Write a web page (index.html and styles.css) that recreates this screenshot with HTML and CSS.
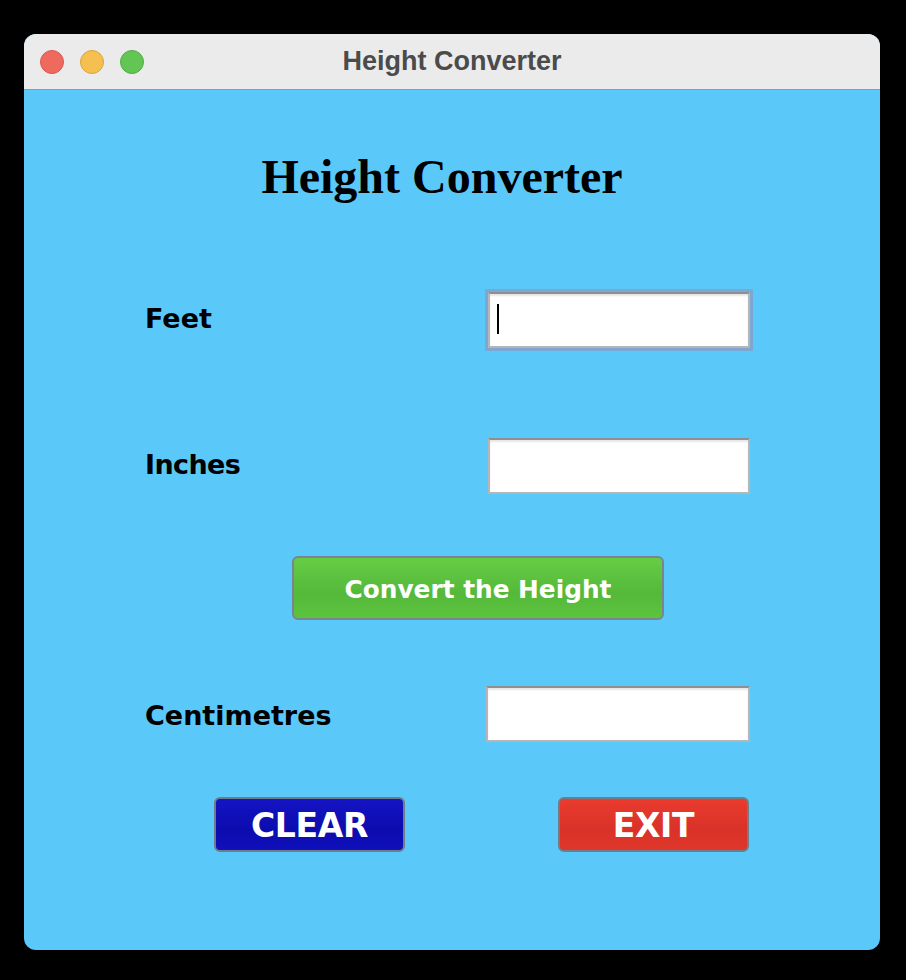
FILE: index.html
```html
<!DOCTYPE html>
<html>
<head>
<meta charset="utf-8">
<title>Height Converter</title>
<link rel="stylesheet" href="styles.css">
</head>
<body>
<div class="window">
  <div class="titlebar">
    <div class="lights">
      <span class="light red"></span>
      <span class="light yellow"></span>
      <span class="light green"></span>
    </div>
    <div class="title">Height Converter</div>
  </div>
  <div class="content">
    <h1 class="heading">Height Converter</h1>
    <div class="row row-feet">
      <span class="label">Feet</span>
      <div class="field focused"><span class="caret"></span></div>
    </div>
    <div class="row row-inches">
      <span class="label">Inches</span>
      <div class="field"></div>
    </div>
    <div class="convert-wrap">
      <button class="btn convert">Convert the Height</button>
    </div>
    <div class="row row-cm">
      <span class="label">Centimetres</span>
      <div class="field wide"></div>
    </div>
    <div class="actions">
      <button class="btn big clear">CLEAR</button>
      <button class="btn big exit">EXIT</button>
    </div>
  </div>
</div>
</body>
</html>
```

FILE: styles.css
```css
html, body {
  margin: 0;
  padding: 0;
  background: #000;
}
body {
  width: 906px;
  height: 980px;
  overflow: hidden;
}
.window {
  width: 856px;
  height: 916px;
  margin: 34px 0 0 24px;
  border-radius: 12px;
  overflow: hidden;
  background: #5bc8fa;
  display: flex;
  flex-direction: column;
}
.titlebar {
  height: 55px;
  flex: none;
  background: #ebebeb;
  border-bottom: 1px solid #4cb2e4;
  display: flex;
  align-items: center;
  position: relative;
}
.lights {
  display: flex;
  gap: 16px;
  padding-left: 16px;
}
.light {
  width: 24px;
  height: 24px;
  border-radius: 50%;
  box-sizing: border-box;
}
.red { background: #ee6a5f; border: 1px solid #d9584f; }
.yellow { background: #f5c04f; border: 1px solid #dba53c; }
.green { background: #62c554; border: 1px solid #4fae44; }
.title {
  position: absolute;
  left: 0;
  right: 0;
  top: 0;
  bottom: 0;
  display: flex;
  align-items: center;
  justify-content: center;
  font-family: "Liberation Sans", Arial, sans-serif;
  font-weight: bold;
  font-size: 27px;
  color: #4b4b4b;
  pointer-events: none;
}
.content {
  display: flex;
  flex-direction: column;
  flex: 1;
}
.heading {
  margin: 59px 0 0 0;
  height: 56px;
  line-height: 56px;
  text-align: center;
  padding-right: 20px;
  font-family: "Liberation Serif", "Times New Roman", serif;
  font-weight: bold;
  font-size: 48px;
  color: #000;
}
.row {
  display: flex;
  align-items: center;
  height: 56px;
  padding-left: 121px;
}
.row-feet { margin-top: 87px; }
.row-inches { margin-top: 90px; }
.row-cm { margin-top: 66px; }
.label {
  width: 343px;
  font-family: "DejaVu Sans", Verdana, sans-serif;
  font-weight: bold;
  font-size: 27px;
  color: #000;
  padding-bottom: 3px;
}
.row-inches .label {
  letter-spacing: -0.6px;
}
.row-cm .label {
  padding-bottom: 0;
  padding-top: 3px;
}
.field {
  width: 262px;
  height: 56px;
  box-sizing: border-box;
  background: #fff;
  border: 2px solid #b6b6b6;
  border-top-color: #8f8f8f;
  box-shadow: inset 0 2px 2px rgba(0, 0, 0, 0.10);
  position: relative;
}
.field.wide {
  width: 264px;
  margin-left: -2px;
}
.field.focused {
  box-shadow: inset 0 2px 2px rgba(0, 0, 0, 0.10), 0 0 0 3px #7ea6d3;
}
.caret {
  position: absolute;
  left: 7px;
  top: 10px;
  width: 2px;
  height: 30px;
  background: #000;
}
.convert-wrap {
  margin-top: 62px;
  padding-left: 268px;
  display: flex;
}
.btn {
  box-sizing: border-box;
  border: 2px solid #6f7d88;
  border-radius: 6px;
  color: #fff;
  font-family: "DejaVu Sans", Verdana, sans-serif;
  font-weight: bold;
  padding: 0;
  margin: 0;
  cursor: pointer;
}
.convert {
  width: 372px;
  height: 64px;
  font-size: 24.8px;
  padding-top: 3px;
  background: linear-gradient(#64cd45, #55b83a 60%, #5cc43f);
  border-color: #7b8590;
}
.actions {
  margin-top: 55px;
  padding-left: 190px;
  display: flex;
  gap: 153px;
}
.big {
  width: 191px;
  height: 55px;
  font-size: 33px;
  letter-spacing: -0.3px;
  padding-top: 2px;
}
.clear {
  background: linear-gradient(#1414c4, #0c0cae 60%, #1010bc);
}
.exit {
  background: linear-gradient(#ea3b2e, #d93228 60%, #e0372b);
}
```
